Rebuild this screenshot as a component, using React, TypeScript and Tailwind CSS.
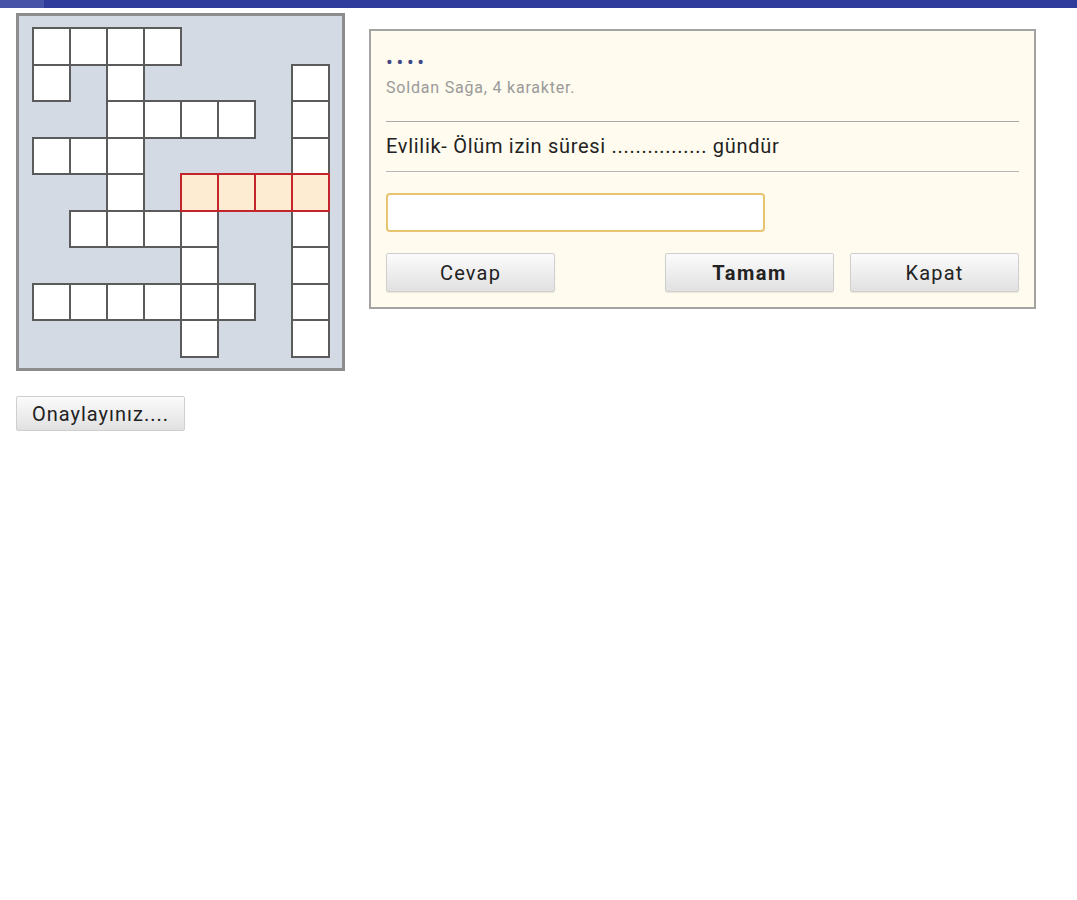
import React from "react";

// 8 columns x 9 rows; "r-c" keys of the white cells
const cells = new Set([
  "0-0", "0-1", "0-2", "0-3",
  "1-0", "1-2", "1-7",
  "2-2", "2-3", "2-4", "2-5", "2-7",
  "3-0", "3-1", "3-2", "3-7",
  "4-2", "4-4", "4-5", "4-6", "4-7",
  "5-1", "5-2", "5-3", "5-4", "5-7",
  "6-4", "6-7",
  "7-0", "7-1", "7-2", "7-3", "7-4", "7-5", "7-7",
  "8-4", "8-7",
]);
const active = new Set(["4-4", "4-5", "4-6", "4-7"]);

const btn =
  "h-[39px] w-[169px] border border-[#cfcfcf] rounded-[2px] bg-gradient-to-b from-[#fbfbfb] to-[#e1e1e1] text-[20px] text-[#222] shadow-[0_1px_1px_rgba(0,0,0,0.08)]";

function Board() {
  const items = [];
  for (let r = 0; r < 9; r++) {
    for (let c = 0; c < 8; c++) {
      const key = `${r}-${c}`;
      if (!cells.has(key)) {
        items.push(<div key={key} />);
      } else if (active.has(key)) {
        items.push(
          <div key={key} className="relative z-10 bg-[#fdebd2] outline-2 outline-[#c4242b] -outline-offset-1" />
        );
      } else {
        items.push(
          <div key={key} className="bg-white outline-2 outline-[#5b5b5b] -outline-offset-1" />
        );
      }
    }
  }
  return (
    <div className="w-[329px] h-[358px] border-[3px] border-[#8d8d8d] bg-[#d3dae3] pt-[12px] pl-[14px] shrink-0">
      <div className="grid grid-cols-[repeat(8,37px)] grid-rows-[repeat(9,36.5px)]">{items}</div>
    </div>
  );
}

function CluePanel() {
  return (
    <div className="mt-[16px] w-[667px] border-2 border-[#a3a3a3] bg-[#fffbee] px-[15px] pb-[15px]">
      <div className="mt-[21px] h-[20px] leading-[20px] text-[20px] text-[#3f4784] tracking-[3.7px]">••••</div>
      <div className="mt-[6px] h-[20px] leading-[20px] text-[16px] text-[#9a9a9a] tracking-[0.8px]">Soldan Sağa, 4 karakter.</div>
      <div className="mt-[23px] border-t border-[#a8a8a8]" />
      <div className="mt-[12px] h-[24px] leading-[24px] text-[20px] text-[#222] tracking-[0.7px]">
        Evlilik- Ölüm izin süresi ................ gündür
      </div>
      <div className="mt-[13px] border-t border-[#b8b8b8]" />
      <input
        className="mt-[21px] block h-[39px] w-[379px] bg-white border-2 border-[#e7c570] rounded-[4px] px-2 text-[18px] outline-none"
        type="text"
      />
      <div className="mt-[21px] flex">
        <button className={`${btn} tracking-[1.2px]`}>Cevap</button>
        <button className={`${btn} ml-auto font-bold tracking-[1.5px]`}>Tamam</button>
        <button className={`${btn} ml-[16px] tracking-[1.2px]`}>Kapat</button>
      </div>
    </div>
  );
}

export default function App() {
  return (
    <div className="min-h-[900px] bg-white font-['Roboto',sans-serif]">
      <div className="h-[8px] bg-[#2f3c9c] flex">
        <div className="w-[44px] bg-[#4753a6]" />
      </div>
      <div className="pl-[16px] pt-[5px]">
        <div className="flex items-start gap-[24px]">
          <Board />
          <CluePanel />
        </div>
        <button className="mt-[25px] h-[35px] w-[169px] border border-[#cfcfcf] rounded-[2px] bg-gradient-to-b from-[#fbfbfb] to-[#e1e1e1] text-[20px] text-[#222] tracking-[1px]">
          Onaylayınız....
        </button>
      </div>
    </div>
  );
}
